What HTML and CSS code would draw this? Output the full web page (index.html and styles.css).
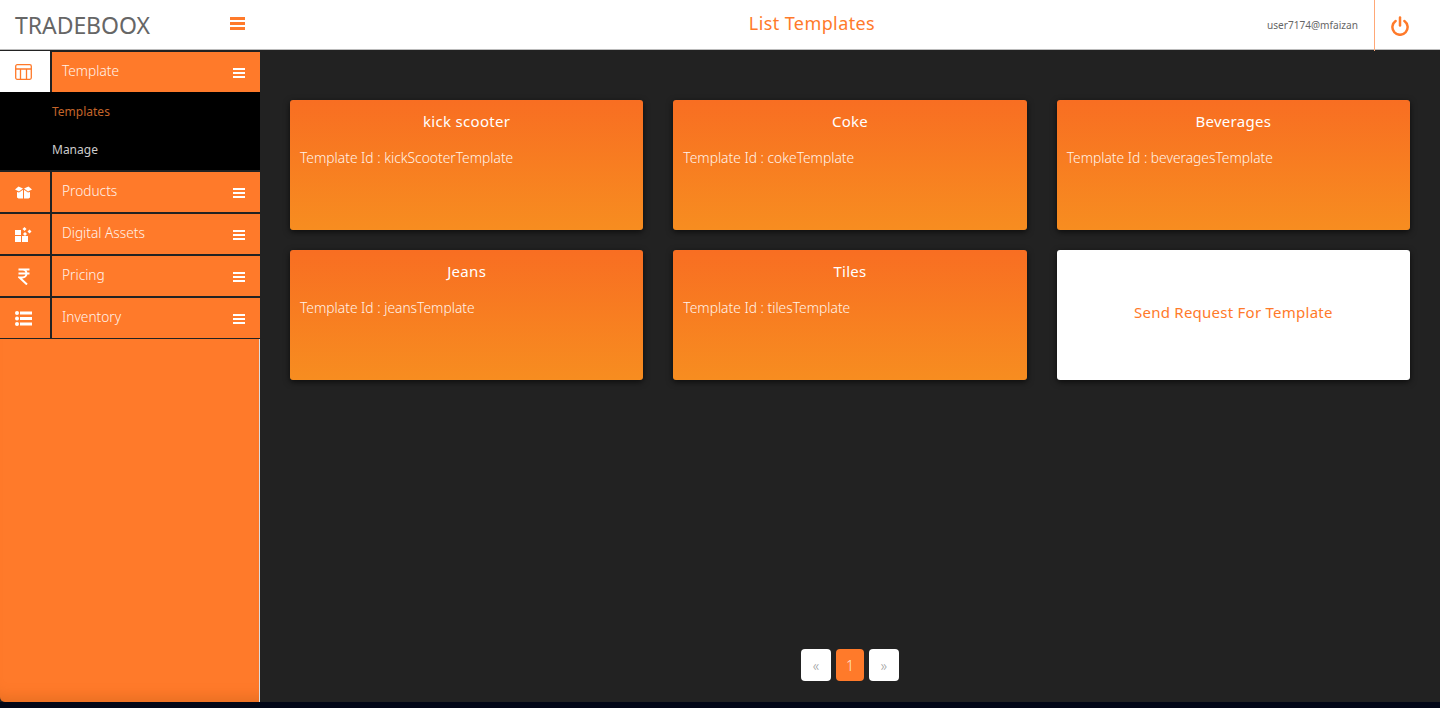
FILE: index.html

```html
<!DOCTYPE html>
<html lang="en">
<head>
  <meta charset="UTF-8" />
  <meta name="viewport" content="width=device-width, initial-scale=1.0" />
  <title>List Templates</title>
  <link rel="stylesheet" href="styles.css">
</head>
<body>
  <div class="app">
    <header class="topbar">
      <div class="brand">
        <div class="logo">TRADEBOOX</div>
        <svg class="toggle" viewBox="0 0 16 13"><path d="M0 0h15v3H0zM0 5h15v3H0zM0 10h15v3H0z" fill="#ff7a2a"/></svg>
      </div>
      <h1 class="page-title">List Templates</h1>
      <div class="user">user7174@mfaizan</div>
      <div class="power">
        <svg viewBox="0 0 20 20" width="20" height="20" fill="none" stroke="#ff7a2a" stroke-width="2.500" stroke-linecap="round"><path d="M10 1.500v8"/><path d="M5.600 5a7.600 7.600 0 1 0 8.800 0"/></svg>
      </div>
    </header>
    <div class="content">
      <aside class="sidebar">
        <div class="menu-row first">
          <div class="menu-icon active">
            <svg viewBox="0 0 17 16" width="17" height="16" fill="none" stroke="#ff7a2a" stroke-width="1.300"><rect x="0.700" y="0.700" width="15.600" height="14.600" rx="1.500"/><path d="M0.700 5h15.600M5.500 5v10.300M11.500 5v10.300"/></svg>
          </div>
          <div class="menu-label"><span>Template</span><span class="bars"></span></div>
        </div>
        <div class="submenu">
          <a class="current" href="#">Templates</a>
          <a href="#">Manage</a>
        </div>
        <div class="menu-row">
          <div class="menu-icon">
            <svg viewBox="0 0 17 13" width="17" height="13" fill="#fff"><path d="M0 3.500 3.500 0.500 8 2.500 4 5.500zM17 3.500 13.500 0.500 9 2.500 13 5.500z"/><path d="M2 6 4 6.500 8 3.800V12.500H3.500L2 11.500zM15 6 13 6.500 9 3.800V12.500H13.500L15 11.500z"/></svg>
          </div>
          <div class="menu-label"><span>Products</span><span class="bars"></span></div>
        </div>
        <div class="menu-row">
          <div class="menu-icon">
            <svg viewBox="0 0 17 15" width="17" height="15" fill="#fff"><rect x="0" y="3" width="6" height="5"/><rect x="0" y="9" width="6" height="6"/><rect x="7" y="9" width="6" height="6"/><path d="M9.500 0l2 2-2 2-2-2zM14.500 2.500l2 2-2 2-2-2zM10 5l2 2-2 2-2-2z"/></svg>
          </div>
          <div class="menu-label"><span>Digital Assets</span><span class="bars"></span></div>
        </div>
        <div class="menu-row">
          <div class="menu-icon">
            <svg viewBox="0 0 12 17" width="12" height="17" fill="none" stroke="#fff" stroke-width="2"><path d="M0.500 1.500h11M0.500 5.500h11M3 1.500h1.500a3.800 3.800 0 0 1 0 8H1.500l7.500 7"/></svg>
          </div>
          <div class="menu-label"><span>Pricing</span><span class="bars"></span></div>
        </div>
        <div class="menu-row">
          <div class="menu-icon">
            <svg viewBox="0 0 17 15" width="17" height="15" fill="#fff"><circle cx="2" cy="2" r="2"/><circle cx="2" cy="7.500" r="2"/><circle cx="2" cy="13" r="2"/><rect x="5" y="0.500" width="12" height="3"/><rect x="5" y="6" width="12" height="3"/><rect x="5" y="11.500" width="12" height="3"/></svg>
          </div>
          <div class="menu-label"><span>Inventory</span><span class="bars"></span></div>
        </div>
        <div class="sidebar-fill"></div>
      </aside>
      <main class="main">
        <div class="cards">
          <div class="card">
            <h3>kick scooter</h3>
            <p>Template Id : kickScooterTemplate</p>
          </div>
          <div class="card">
            <h3>Coke</h3>
            <p>Template Id : cokeTemplate</p>
          </div>
          <div class="card">
            <h3>Beverages</h3>
            <p>Template Id : beveragesTemplate</p>
          </div>
          <div class="card">
            <h3>Jeans</h3>
            <p>Template Id : jeansTemplate</p>
          </div>
          <div class="card">
            <h3>Tiles</h3>
            <p>Template Id : tilesTemplate</p>
          </div>
          <div class="card request">Send Request For Template</div>
        </div>
        <div class="pagination">
          <a href="#">«</a>
          <a class="active" href="#">1</a>
          <a href="#">»</a>
        </div>
      </main>
    </div>
  </div>
</body>
</html>
```

FILE: styles.css

```css
* {
  box-sizing: border-box;
}
html, body {
  height: 100%;
}
body {
  margin: 0;
  background-color: #020617;
  font-family: "Noto Sans", Arial, sans-serif;
  overflow: hidden;
}
.app {
  height: 702px;
  display: flex;
  flex-direction: column;
  background-color: #222;
}
.topbar {
  height: 50px;
  flex: none;
  background-color: #fff;
  border-bottom: 1px solid #bbb;
  display: flex;
  align-items: center;
}
.brand {
  width: 260px;
  flex: none;
  display: flex;
  align-items: center;
  justify-content: space-between;
  padding: 0 14px 0 15px;
}
.logo {
  font-size: 23px;
  color: #666;
  letter-spacing: -0.050px;
}
.toggle {
  width: 16px;
  height: 13px;
  margin-top: -3px;
}
.page-title {
  flex: 1;
  margin: -3px 0 0;
  font-size: 18px;
  font-weight: 400;
  letter-spacing: 0.400px;
  color: #ff7a2a;
  text-align: center;
  padding-left: 97px;
}
.user {
  font-size: 10.100px;
  color: #666;
  width: 107px;
  margin-top: 1px;
}
.power {
  width: 66px;
  height: 51px;
  margin-bottom: -1px;
  border-left: 1px solid #ffa877;
  display: flex;
  align-items: center;
  justify-content: center;
  padding-right: 15px;
  align-self: flex-start;
}
.content {
  flex: 1;
  display: flex;
  min-height: 0;
}
.sidebar {
  width: 260px;
  flex: none;
  display: flex;
  flex-direction: column;
  gap: 2px;
  padding-top: 1px;
}
.menu-row {
  height: 40px;
  display: flex;
  gap: 2px;
}
.menu-row.first {
  height: 41px;
  margin-bottom: -2px;
}
.menu-icon {
  width: 50px;
  background-color: #ff7a2a;
  display: flex;
  align-items: center;
  justify-content: center;
  padding-right: 3px;
}
.menu-icon.active {
  background-color: #fff;
}
.menu-label {
  flex: 1;
  background-color: #ff7a2a;
  color: #fff3ea;
  font-size: 13.700px;
  font-weight: 300;
  display: flex;
  align-items: center;
  justify-content: space-between;
  padding: 0 15px 3px 10px;
}
.first .menu-label {
  margin-top: 1px;
}
.bars {
  width: 12px;
  height: 10px;
  margin-top: 5px;
  border-top: 2px solid #fff;
  border-bottom: 2px solid #fff;
  position: relative;
}
.bars::after {
  content: "";
  position: absolute;
  left: 0;
  right: 0;
  top: 2px;
  height: 2px;
  background-color: #fff;
}
.submenu {
  height: 78px;
  background-color: #000;
  display: flex;
  flex-direction: column;
}
.submenu a {
  height: 38px;
  padding: 9px 0 0 52px;
  font-size: 12px;
  color: #ccc;
  text-decoration: none;
}
.submenu a.current {
  color: #c4652a;
  padding-top: 11px;
  height: 40px;
}
.sidebar-fill {
  flex: 1;
  margin-top: -1px;
  background-color: #ff7a2a;
  border-right: 1px solid #ddd;
  border-bottom-left-radius: 5px;
  box-shadow: inset 0 -16px 14px -12px rgba(190, 90, 20, 0.4);
}
.main {
  flex: 1;
  display: flex;
  flex-direction: column;
  padding: 50px 30px 21px;
  min-width: 0;
}
.cards {
  display: grid;
  grid-template-columns: repeat(3, 1fr);
  grid-auto-rows: 130px;
  gap: 20px 30px;
}
.card {
  border-radius: 3px;
  padding: 10px;
  color: #fff;
  background: linear-gradient(to bottom, #f86e22, #f78d20);
  box-shadow: 0 2px 6px rgba(0, 0, 0, 0.65);
}
.card h3 {
  margin: 0 0 16px;
  font-size: 15px;
  font-weight: 400;
  letter-spacing: 0.300px;
  text-align: center;
  line-height: 22px;
}
.card p {
  margin: 0;
  font-size: 13.800px;
  font-weight: 300;
  color: #fff3ea;
  line-height: 20px;
}
.card.request {
  background: #fff;
  color: #ff7a2a;
  font-size: 15px;
  letter-spacing: 0.250px;
  display: flex;
  align-items: center;
  justify-content: center;
  padding: 3px 10px 10px;
}
.pagination {
  margin-top: auto;
  display: flex;
  justify-content: center;
  gap: 5px;
}
.pagination a {
  width: 30px;
  height: 32px;
  border-radius: 4px;
  background-color: #fff;
  color: #999;
  font-size: 14px;
  font-weight: 300;
  text-decoration: none;
  display: flex;
  align-items: center;
  justify-content: center;
}
.pagination a.active {
  width: 28px;
  background-color: #ff7a2a;
  color: #ffe6d6;
}
```
